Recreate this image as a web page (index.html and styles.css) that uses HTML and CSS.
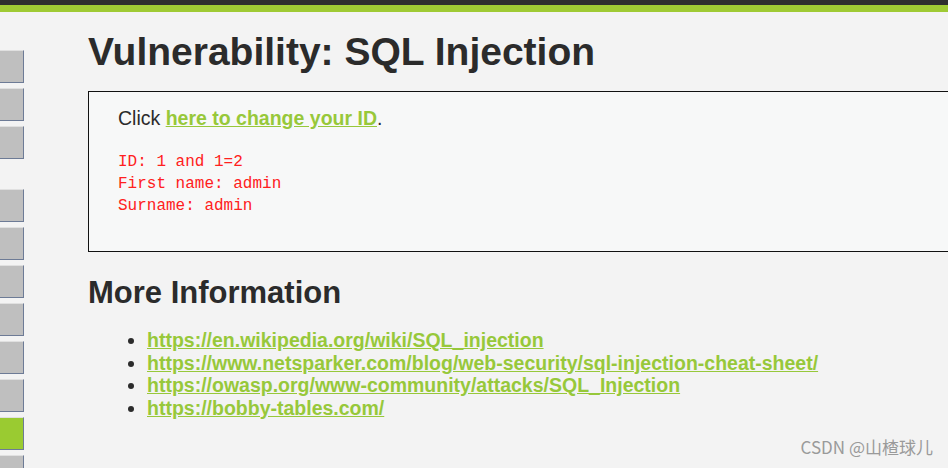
FILE: index.html
```html
<!DOCTYPE html>
<html>
<head>
<meta charset="utf-8">
<link rel="stylesheet" href="styles.css">
</head>
<body>
<div class="topbar"></div>
<div class="greenbar"></div>
<div class="layout">
  <nav class="sidebar">
    <div class="group">
      <div class="btn"></div>
      <div class="btn"></div>
      <div class="btn"></div>
    </div>
    <div class="group">
      <div class="btn"></div>
      <div class="btn"></div>
      <div class="btn"></div>
      <div class="btn"></div>
      <div class="btn"></div>
      <div class="btn"></div>
      <div class="btn active"></div>
      <div class="btn"></div>
    </div>
  </nav>
  <main class="main">
    <h1 class="title">Vulnerability: SQL Injection</h1>
    <div class="vuln-box">
      <p class="click">Click <a href="#">here to change your ID</a>.</p>
      <pre class="result">ID: 1 and 1=2
First name: admin
Surname: admin</pre>
    </div>
    <h2 class="subtitle">More Information</h2>
    <ul class="links">
      <li><a href="#">https://en.wikipedia.org/wiki/SQL_injection</a></li>
      <li><a href="#">https://www.netsparker.com/blog/web-security/sql-injection-cheat-sheet/</a></li>
      <li><a href="#">https://owasp.org/www-community/attacks/SQL_Injection</a></li>
      <li><a href="#">https://bobby-tables.com/</a></li>
    </ul>
  </main>
</div>
<div class="watermark">CSDN @山楂球儿</div>
</body>
</html>
```
FILE: styles.css
```css
html, body {
  margin: 0;
  padding: 0;
  height: 100%;
  overflow: hidden;
}
body {
  background: #f3f3f3;
  font-family: "Liberation Sans", Arial, sans-serif;
  color: #2b2b2b;
  position: relative;
}
.topbar {
  height: 5px;
  background: #2e2e2e;
}
.greenbar {
  height: 7px;
  background: #9fca34;
}
.layout {
  display: flex;
}
.sidebar {
  width: 24px;
  flex-shrink: 0;
  padding-top: 38px;
  display: flex;
  flex-direction: column;
  gap: 30px;
}
.group {
  display: flex;
  flex-direction: column;
  gap: 5px;
}
.btn {
  height: 31px;
  background: #bfbfbf;
  border-top: 1px solid #e0e0e0;
  border-right: 1px solid #6d7b96;
  border-bottom: 1px solid #6d7b96;
}
.btn.active {
  background: #9acb31;
}
.main {
  flex: 1;
  padding-left: 64px;
  min-width: 0;
}
.title {
  margin: 17px 0 0;
  font-size: 39px;
  line-height: 45px;
  font-weight: bold;
  color: #2b2b2b;
}
.vuln-box {
  margin-top: 17px;
  height: 161px;
  box-sizing: border-box;
  border: 1px solid #111;
  border-right: none;
  background: #f7f8f8;
  padding: 14px 29px;
}
.click {
  margin: 0;
  font-size: 19.5px;
  line-height: 24px;
}
a {
  color: #97c83a;
  font-weight: bold;
}
.result {
  margin: 21px 0 0;
  font-family: "Liberation Mono", monospace;
  font-size: 16px;
  line-height: 22px;
  color: #ff2020;
}
.subtitle {
  margin: 23px 0 0;
  font-size: 31px;
  line-height: 36px;
  font-weight: bold;
}
.links {
  margin: 18px 0 0;
  padding-left: 59px;
  font-size: 19.5px;
  line-height: 22.5px;
}
.watermark {
  position: absolute;
  right: 15px;
  bottom: 9px;
  font-family: "Noto Sans CJK SC", "Liberation Sans", sans-serif;
  font-size: 17px;
  color: #9a9a9a;
}
```
